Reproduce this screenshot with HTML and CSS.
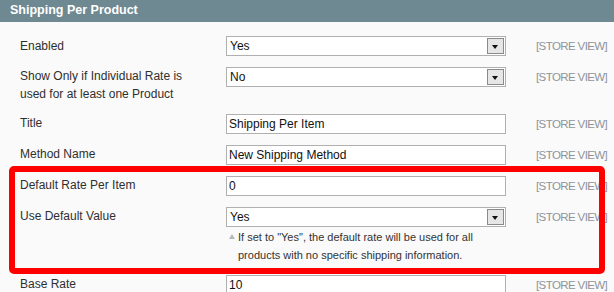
FILE: index.html
```html
<!DOCTYPE html>
<html lang="en">
<head>
<meta charset="UTF-8">
<title>Shipping Per Product</title>
<link rel="stylesheet" href="styles.css">
</head>
<body>

<!-- section head -->
<div class="section-head">
    <h4>Shipping Per Product</h4>
</div>

<div class="fieldset">
    <div class="row">
        <div class="label">Enabled</div>
        <div class="value"><div class="select"><span>Yes</span><i class="arrow"></i></div></div>
        <div class="scope">[STORE VIEW]</div>
    </div>
    <div class="row">
        <div class="label">Show Only if Individual Rate is used for at least one Product</div>
        <div class="value"><div class="select"><span>No</span><i class="arrow"></i></div></div>
        <div class="scope">[STORE VIEW]</div>
    </div>
    <div class="row">
        <div class="label">Title</div>
        <div class="value"><div class="input">Shipping Per Item</div></div>
        <div class="scope">[STORE VIEW]</div>
    </div>
    <div class="row">
        <div class="label">Method Name</div>
        <div class="value"><div class="input">New Shipping Method</div></div>
        <div class="scope">[STORE VIEW]</div>
    </div>
    <div class="row">
        <div class="label">Default Rate Per Item</div>
        <div class="value"><div class="input">0</div></div>
        <div class="scope">[STORE VIEW]</div>
    </div>
    <div class="row">
        <div class="label">Use Default Value</div>
        <div class="value">
            <div class="select"><span>Yes</span><i class="arrow"></i></div>
            <p class="note">If set to "Yes", the default rate will be used for all<br>products with no specific shipping information.</p>
        </div>
        <div class="scope">[STORE VIEW]</div>
    </div>
    <div class="row">
        <div class="label">Base Rate</div>
        <div class="value"><div class="input">10</div></div>
        <div class="scope">[STORE VIEW]</div>
    </div>
</div>

<!-- red highlight frame -->
<div class="highlight"></div>

</body>
</html>
```

FILE: styles.css
```css
body {
    margin: 0;
    padding: 0;
    font-family: "Liberation Sans", Arial, sans-serif;
    font-size: 12px;
    color: #2f2f2f;
    background-color: #fafafa;
}
.section-head {
    height: 22px;
    background-color: #6f8992;
    padding: 0 10px;
}
.section-head h4 {
    margin: 0;
    line-height: 21px;
    font-size: 12.5px;
    font-weight: bold;
    color: #fff;
}
.fieldset {
    padding-top: 9px;
}
.row {
    display: grid;
    grid-template-columns: 226px 280px 1fr;
    padding: 5px 0 6px;
}
.label {
    padding: 0 26px 0 20px;
    line-height: 18px;
}
.row:first-child .label {
    padding-top: 1px;
}
.input,
.select {
    box-sizing: border-box;
    height: 20px;
    border: 1px solid #b0b0b0;
    background-color: #fff;
    color: #111;
    line-height: 18px;
}
.input {
    padding: 0 2px;
}
.select {
    display: flex;
    justify-content: space-between;
    padding: 0 1px 0 3px;
}
.select .arrow {
    box-sizing: border-box;
    width: 17px;
    height: 16px;
    margin-top: 1px;
    border: 1px solid #8a8a8a;
    background-color: #e6e6e6;
    position: relative;
}
.select .arrow::after {
    content: "";
    position: absolute;
    left: 4px;
    top: 6px;
    border-left: 3.5px solid transparent;
    border-right: 3.5px solid transparent;
    border-top: 4px solid #111;
}
.note {
    position: relative;
    margin: 1px 0 0;
    padding-left: 12px;
    font-size: 11px;
    line-height: 18px;
    color: #333;
}
.note::before {
    content: "";
    position: absolute;
    left: 3px;
    top: 6px;
    border-left: 3px solid transparent;
    border-right: 3px solid transparent;
    border-bottom: 5px solid #b4b8bb;
}
.scope {
    padding: 1px 0 0 30px;
    font-size: 11.5px;
    letter-spacing: -0.6px;
    line-height: 18px;
    color: #8e949a;
    white-space: nowrap;
}
/* annotation frame */
.highlight {
    position: absolute;
    left: 9px;
    top: 166px;
    width: 596px;
    height: 108px;
    box-sizing: border-box;
    border: 6px solid #f00;
    border-radius: 5px;
}
```
